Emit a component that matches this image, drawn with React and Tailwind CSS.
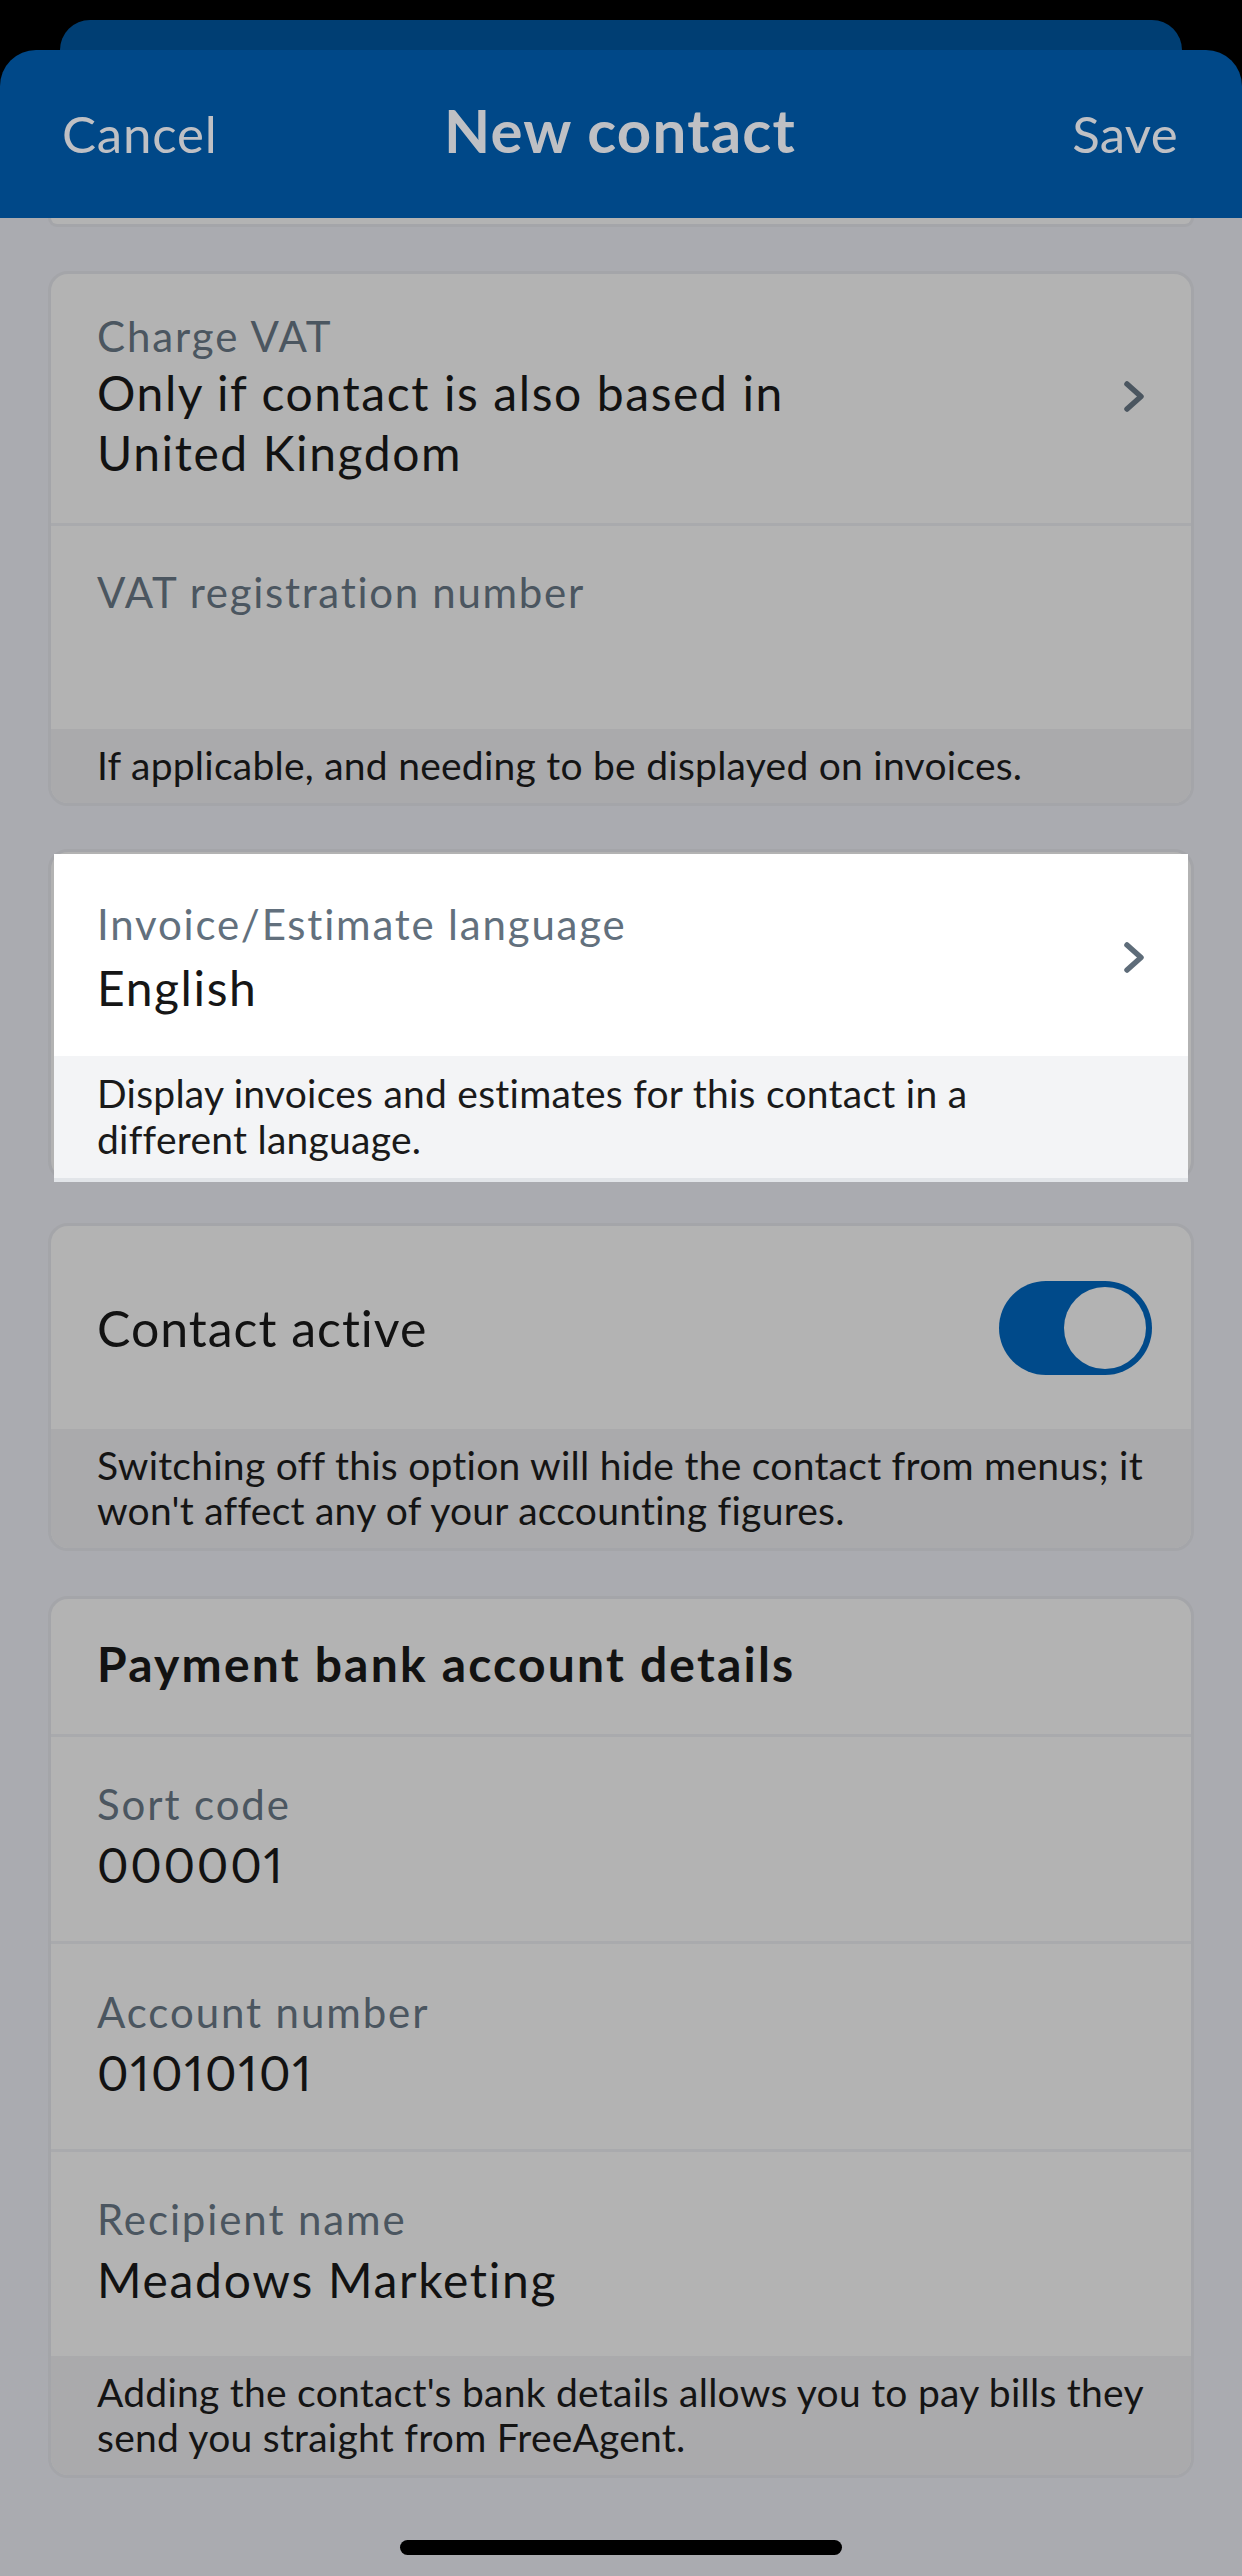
import React from "react";

function Chevron({ color = "#4b5660" }) {
  return (
    <svg width="22" height="33" viewBox="0 0 22 33" className="shrink-0">
      <polyline
        points="4,4 18,16.5 4,29"
        fill="none"
        stroke={color}
        strokeWidth="5.5"
        strokeLinecap="round"
        strokeLinejoin="round"
      />
    </svg>
  );
}

function Card({ children, className = "" }) {
  return (
    <div
      className={`mx-[48px] rounded-[20px] border-[3px] border-[#a4a5a9] bg-[#b3b3b3] overflow-hidden ${className}`}
    >
      {children}
    </div>
  );
}

function Field({ label, value, className = "" }) {
  return (
    <div className={`border-t-[3px] border-[#a9aaad] px-[46px] pt-[40px] pb-[46px] ${className}`}>
      <div className="text-[42px] leading-[54px] tracking-[1.9px] text-[#4b5660]">{label}</div>
      <div className="mt-[4px] text-[48px] leading-[60px] tracking-[1.7px] proportional-nums text-[#121212]">
        {value}
      </div>
    </div>
  );
}

function Note({ children, className = "" }) {
  return (
    <div
      className={`bg-[#aaaaac] px-[46px] pt-[14px] pb-[15px] text-[39px] leading-[45px] tracking-[0.25px] text-[#141414] ${className}`}
    >
      {children}
    </div>
  );
}

export default function App() {
  return (
    <div className="w-[1242px] h-[2576px] bg-[#aaabb0] font-['Lato',sans-serif] overflow-hidden flex flex-col">
      {/* header sheets */}
      <div className="bg-black pt-[20px] shrink-0">
        <div className="mx-[60px] h-[30px] rounded-t-[30px] bg-[#003e73]" />
        <div className="h-[168px] rounded-t-[36px] bg-[#004888] flex items-baseline pl-[62px] pr-[64px] pt-[50px] text-[#bfc0c4]">
          <div className="flex-1 text-[51px] leading-[60px] tracking-[0.8px]">Cancel</div>
          <div className="text-[60px] font-bold leading-[60px] tracking-[1.2px]">New contact</div>
          <div className="flex-1 text-right text-[51px] leading-[60px] tracking-[0.3px]">Save</div>
        </div>
      </div>

      {/* tail of the card scrolled under the header */}
      <div className="mx-[48px] h-[9px] rounded-b-[12px] border-x-[3px] border-b-[3px] border-[#a4a5a9] bg-[#b3b3b3]" />

      {/* VAT */}
      <Card className="mt-[44px]">
        <div className="flex items-center px-[46px] pt-[35px] pb-[40px]">
          <div className="flex-1">
            <div className="text-[42px] leading-[54px] tracking-[1.9px] text-[#4b5660]">Charge VAT</div>
            <div className="text-[48px] leading-[60px] tracking-[1.6px] text-[#121212]">
              Only if contact is also based in
              <br />
              United Kingdom
            </div>
          </div>
          <Chevron />
        </div>
        <div className="border-t-[3px] border-[#a9aaad] px-[46px] pt-[39px] pb-[46px]">
          <div className="text-[42px] leading-[54px] tracking-[1.7px] text-[#4b5660]">VAT registration number</div>
          <div className="mt-[4px] h-[60px]" />
        </div>
        <Note className="pt-[13px] pb-[14px]">If applicable, and needing to be displayed on invoices.</Note>
      </Card>

      {/* highlighted language card */}
      <div className="mx-[48px] mt-[43px] rounded-[20px] border-[3px] border-[#a4a5a9] bg-[#b3b3b3] px-[3px] pt-[2px]">
        <div className="-mb-[4px] relative bg-white">
          <div className="flex items-center pl-[43px] pr-[43px] pt-[43px] pb-[38px]">
            <div className="flex-1">
              <div className="text-[42px] leading-[54px] tracking-[1.8px] text-[#62707d]">
                Invoice/Estimate language
              </div>
              <div className="mt-[7px] text-[48px] leading-[60px] tracking-[1.6px] text-[#161616]">English</div>
            </div>
            <Chevron color="#5e6c79" />
          </div>
          <div className="bg-[#f3f4f6] pl-[43px] pr-[110px] pt-[14px] pb-[16px] text-[39px] leading-[46px] tracking-[0.25px] text-[#1a1a1a]">
            Display invoices and estimates for this contact in a different language.
          </div>
          <div className="h-[4px] bg-[#e2e5e9]" />
        </div>
      </div>

      {/* contact active */}
      <Card className="mt-[42px]">
        <div className="h-[203px] flex items-center pl-[46px] pr-[39px]">
          <div className="flex-1 text-[50px] leading-[60px] tracking-[1px] text-[#121212]">Contact active</div>
          <div className="w-[153px] h-[94px] rounded-full bg-[#004a8a] flex items-center justify-end p-[6px]">
            <div className="w-[82px] h-[82px] rounded-full bg-[#b3b3b3]" />
          </div>
        </div>
        <Note>
          Switching off this option will hide the contact from menus; it won't affect any of your accounting figures.
        </Note>
      </Card>

      {/* bank details */}
      <Card className="mt-[45px]">
        <div className="px-[46px] pt-[35px] pb-[40px] text-[48px] leading-[60px] font-bold tracking-[2.2px] text-[#121212]">
          Payment bank account details
        </div>
        <Field label="Sort code" value="000001" />
        <Field label="Account number" value="01010101" className="pt-[41px]" />
        <Field label="Recipient name" value="Meadows Marketing" className="pt-[39px] pb-[45px]" />
        <Note>
          Adding the contact's bank details allows you to pay bills they send you straight from FreeAgent.
        </Note>
      </Card>

      {/* home indicator */}
      <div className="mx-auto mt-[62px] w-[442px] h-[15px] rounded-full bg-black" />
    </div>
  );
}
